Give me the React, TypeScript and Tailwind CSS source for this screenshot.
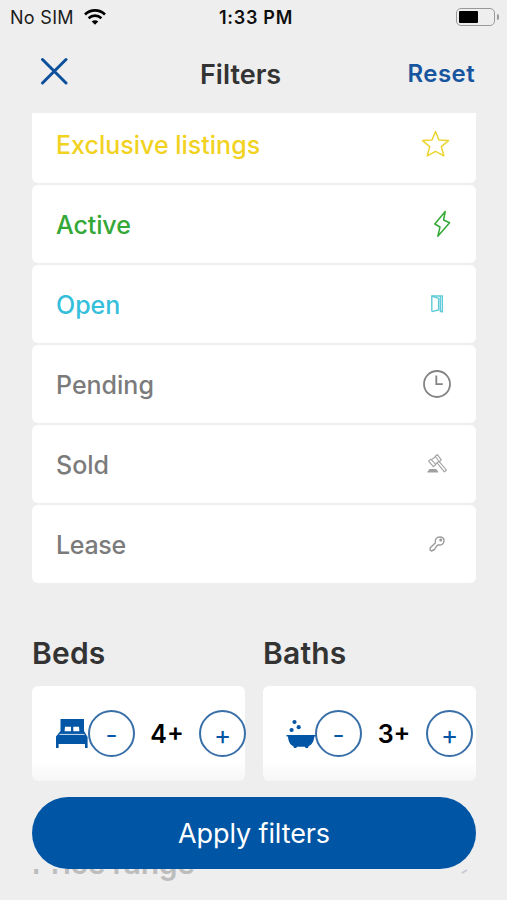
import React from 'react';

const StarIcon = () => (
  <svg className="w-[30px] h-[30px]" viewBox="0 0 30 30" fill="none" stroke="#ecd530" strokeWidth="1.5" strokeLinejoin="round">
    <path d="M14.5 2.5 L18 11 L27.5 11.6 L20.3 17.6 L22.9 26.8 L14.5 22.3 L6.3 26.8 L8.7 17.6 L1.6 11.6 L11 11 Z" />
  </svg>
);

const BoltIcon = () => (
  <svg className="w-[18px] h-7" viewBox="0 0 18 28" fill="none" stroke="#34a836" strokeWidth="1.5" strokeLinejoin="round">
    <path d="M12.2 1.5 L1.8 14 L7 17 L4.8 26.3 L16.6 12.8 L10.6 10 Z" />
  </svg>
);

const DoorIcon = () => (
  <svg className="w-3 h-[18px] mr-2" viewBox="0 0 12 18" fill="none" stroke="#5fcbd8" strokeWidth="1.4">
    <path d="M0.8 16.2 V1 H11.4 V17.4" />
    <path d="M0.8 1 L7.6 3.4 V15 L0.8 16.6 M9.4 1.5 V16.5 H11.4" />
  </svg>
);

const ClockIcon = () => (
  <svg className="w-[30px] h-[30px] mr-[-1px]" viewBox="0 0 30 30" fill="none" stroke="#838383" strokeWidth="1.8">
    <circle cx="15" cy="15" r="13" />
    <path d="M14.3 6.5 V15.2 H20.8" />
  </svg>
);

const GavelIcon = () => (
  <svg className="w-5 h-5 mr-1" viewBox="0 0 20 20" fill="none" stroke="#a0a0a0" strokeWidth="1.1" strokeLinejoin="round">
    <path d="M1.6 7.2 L3.8 5.1 L8.8 10.5 L6.4 12.7 Z" />
    <path d="M8.2 2.2 L10.3 0.6 L14.3 5.8 L12.2 7.8 Z" />
    <path d="M4.6 5.6 L8.5 2.8 M8.6 10 L11.8 7.4 M10.2 9 L17.4 17.8 L19.4 16 L12.2 7.6" />
    <path d="M0.8 18 H10.8 L9 15.6 H2.8 Z" fill="#a0a0a0" />
  </svg>
);

const KeyIcon = () => (
  <svg className="w-4 h-4 mr-1.5" viewBox="0 0 16 16" fill="none" stroke="#9a9a9a" strokeWidth="1.4" strokeLinejoin="round">
    <path d="M1.2 11.7 L6.3 7 C5.5 3.5 7.6 1 10.8 1 C13.3 1 15 2.6 15 4.8 C15 7.9 12.4 9.6 9.2 8.9 L7.5 10.3 L5.5 13.5 L2.5 15 L1 14 Z" />
    <circle cx="11.7" cy="4.1" r="0.8" />
  </svg>
);

const BedIcon = () => (
  <svg className="w-8 h-[30px]" viewBox="0 0 32 30" fill="#0355a5">
    <path d="M4.5 0 H28 V12 L31.6 18 V29 H29 V25 H2.6 V29 H0 V17.5 L4.5 12 Z" />
    <path d="M9 7.8 H15 V12.2 H8.6 Z M17.3 7.8 H23 L23.4 12.2 H17.3 Z" fill="white" />
    <path d="M3.5 15.4 H28.5" stroke="#d5e4f2" strokeWidth="1" />
  </svg>
);

const BathIcon = () => (
  <svg className="w-8 h-[30px]" viewBox="0 0 32 30" fill="#0355a5">
    <circle cx="8.5" cy="3" r="2.1" />
    <circle cx="12.7" cy="8.2" r="2.1" />
    <circle cx="5.6" cy="11" r="2.1" />
    <path d="M0.5 16 H30 V17.6 H28.3 C28 22 26 26 22.6 27.2 L22 29 H19.5 L19 27.8 H11 L10.2 29 H8 L7.3 27.2 C3.9 26 2.3 22 2 17.6 H0.5 Z" />
  </svg>
);

const statuses = [
  { name: 'Exclusive listings', color: 'text-[#f1d21f]', tracking: 'tracking-[0px]', icon: <StarIcon /> },
  { name: 'Active', color: 'text-[#34a836]', tracking: 'tracking-[-0.1px]', icon: <BoltIcon /> },
  { name: 'Open', color: 'text-[#35bfdb]', tracking: 'tracking-[0px]', icon: <DoorIcon /> },
  { name: 'Pending', color: 'text-[#7b7b7b]', tracking: 'tracking-[0px]', icon: <ClockIcon /> },
  { name: 'Sold', color: 'text-[#7b7b7b]', tracking: 'tracking-[0px]', icon: <GavelIcon /> },
  { name: 'Lease', color: 'text-[#7b7b7b]', tracking: 'tracking-[-0.3px]', icon: <KeyIcon /> },
];

const StatusBar = () => (
  <div className="h-[34px] shrink-0 grid grid-cols-3 items-center pl-2.5 pr-2 text-[18px] text-[#1c1c1c]">
    <div className="flex items-center gap-2.5">
      <span className="tracking-[0.3px]">No SIM</span>
      <svg className="w-[22px] h-4 -mt-px" viewBox="0 0 22 16" fill="none" stroke="black" strokeWidth="2.7">
        <path d="M1 5.4 C6.8 0.1 15.2 0.1 21 5.4" />
        <path d="M4.6 9.2 C8.4 5.8 13.6 5.8 17.4 9.2" />
        <path d="M11 15.7 L7.7 12.4 C9.7 10.7 12.3 10.7 14.3 12.4 Z" fill="black" stroke="none" />
      </svg>
    </div>
    <span className="pl-[3px] text-center font-semibold text-[#0e0e0e] whitespace-nowrap tracking-[0.7px]">1:33 PM</span>
    <div className="flex items-center justify-end gap-0.5">
      <div className="w-[39px] h-[18px] rounded-[5px] border-[1.5px] border-[#999] p-[2px]">
        <div className="w-[19px] h-full bg-black rounded-[1px]" />
      </div>
      <div className="w-[2px] h-[6px] rounded-r-full bg-[#999]" />
    </div>
  </div>
);

interface CounterProps {
  title: string;
  value: string;
  icon: React.ReactNode;
  padding: string;
  spacing: string;
}

const Counter: React.FC<CounterProps> = ({ title, value, icon, padding, spacing }) => (
  <section className="w-[213px]">
    <h2 className="text-[30px] leading-9 font-semibold text-[#333] tracking-[0.2px]">{title}</h2>
    <div className={`mt-[15px] h-[95px] rounded-md bg-white flex items-center ${padding}`}>
      <span className="shrink-0 w-8">{icon}</span>
      <button className={`shrink-0 w-[47px] h-[47px] rounded-full border-2 border-[#386fa9] bg-white text-[#0355a5] text-[26px] flex items-center justify-center ${spacing}`}>
        <span className="mt-0.5">-</span>
      </button>
      <span className="shrink-0 w-16 text-center text-[25px] font-semibold text-black mt-0.5">{value}</span>
      <button className="shrink-0 w-[47px] h-[47px] rounded-full border-2 border-[#386fa9] text-[#0355a5] text-[26px] flex items-center justify-center">
        <span className="mt-0.5">+</span>
      </button>
    </div>
  </section>
);

const App: React.FC = () => {
  return (
    <div className="relative w-[507px] h-[900px] overflow-hidden bg-[#eee] flex flex-col font-['Inter',sans-serif]">
      <StatusBar />

      <header className="h-[79px] shrink-0 flex items-center px-8">
        <button className="pl-2 pb-[5px] w-[168px] text-left" aria-label="Close">
          <svg className="w-7 h-7" viewBox="0 0 28 28" stroke="#0c509c" strokeWidth="3" strokeLinecap="round">
            <path d="M2.5 2.5 L26 26 M26 2.5 L2.5 26" />
          </svg>
        </button>
        <h1 className="pt-[3px] text-[27px] font-semibold text-[#333]">Filters</h1>
        <button className="ml-auto text-[24px] font-semibold text-[#17569f] tracking-[0.4px]">Reset</button>
      </header>

      <main className="flex-1 min-h-0 overflow-hidden pl-8 pr-[31px]">
        <div className="flex flex-col gap-[2px] -mt-2">
          {statuses.map((status) => (
            <div key={status.name} className={`h-[78px] shrink-0 rounded-md bg-white flex items-center justify-between pl-6 pr-[25px] ${status.color}`}>
              <span className={`pt-[3px] text-[25px] font-medium ${status.tracking}`}>{status.name}</span>
              {status.icon}
            </div>
          ))}
        </div>

        <div className="mt-[52px] flex justify-between">
          <Counter title="Beds" value="4+" icon={<BedIcon />} padding="pl-6" spacing="ml-0" />
          <Counter title="Baths" value="3+" icon={<BathIcon />} padding="pl-[23px]" spacing="-ml-[3px]" />
        </div>

        <div className="mt-16 flex items-center justify-between">
          <h2 className="text-[30px] leading-9 font-semibold text-[#bdbdbd] tracking-[-0.3px]">Price range</h2>
          <svg className="w-3 h-2 mr-1 mt-4" viewBox="0 0 12 8" stroke="#c4c9d3" strokeWidth="2">
            <path d="M2 6 L7 3" />
          </svg>
        </div>
      </main>

      {/* Sticky action */}
      <div className="absolute inset-x-0 bottom-[31px] pl-8 pr-[31px] pt-9 bg-linear-to-b from-[#eee]/0 from-0% via-[#eee]/50 via-18% to-[#eee] to-40%">
        <button className="block w-full h-[72px] rounded-full bg-[#0055a5] text-white text-[27px] pt-[3px] tracking-[-0.1px]">Apply filters</button>
      </div>
    </div>
  );
};

export default App;
